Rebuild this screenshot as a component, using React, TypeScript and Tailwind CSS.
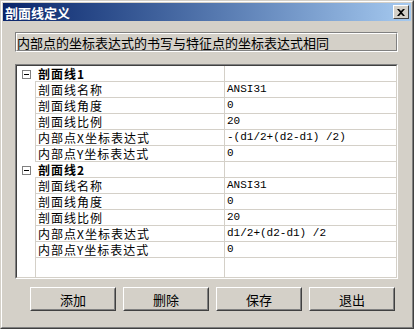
import React from "react";

interface PropRow {
  name: string;
  value: string;
}

interface HatchGroup {
  title: string;
  rows: PropRow[];
}

const groups: HatchGroup[] = [
  {
    title: "剖面线1",
    rows: [
      { name: "剖面线名称", value: "ANSI31" },
      { name: "剖面线角度", value: "0" },
      { name: "剖面线比例", value: "20" },
      { name: "内部点X坐标表达式", value: "-(d1/2+(d2-d1) /2)" },
      { name: "内部点Y坐标表达式", value: "0" },
    ],
  },
  {
    title: "剖面线2",
    rows: [
      { name: "剖面线名称", value: "ANSI31" },
      { name: "剖面线角度", value: "0" },
      { name: "剖面线比例", value: "20" },
      { name: "内部点X坐标表达式", value: "d1/2+(d2-d1) /2" },
      { name: "内部点Y坐标表达式", value: "0" },
    ],
  },
];

const buttons = ["添加", "删除", "保存", "退出"];

const cjk = "[font-family:'Noto_Sans_CJK_SC',sans-serif]";

const MinusBox = () => (
  <div className="w-[9px] h-[9px] border border-[#808080] bg-white flex items-center justify-center">
    <div className="w-[5px] h-px bg-black" />
  </div>
);

const Group = ({ group }: { group: HatchGroup }) => (
  <div>
    <div className="flex h-[16px]">
      <div className="w-[18px] flex items-center justify-center shrink-0">
        <MinusBox />
      </div>
      <div className="w-[189px] shrink-0 border-b border-[#d4d0c8] flex items-center pl-[3px] font-bold text-[12px] tracking-[1px] leading-none">
        {group.title}
      </div>
      <div className="flex-1 border-l border-b border-[#d4d0c8]" />
    </div>
    {group.rows.map((row, idx) => (
      <div key={idx} className="flex h-[16px]">
        <div className="w-[18px] shrink-0" />
        <div className="w-[189px] shrink-0 border-l border-b border-[#d4d0c8] flex items-center pl-[2px] text-[12px] tracking-[1px] leading-none">
          {row.name}
        </div>
        <div className="flex-1 border-l border-b border-[#d4d0c8] flex items-center pl-[2px] text-[11px] leading-none [font-family:'Liberation_Mono',monospace]">
          {row.value}
        </div>
      </div>
    ))}
  </div>
);

const App = () => {
  return (
    <div className={`w-[414px] h-[329px] bg-[#d4d0c8] text-black ${cjk}`}>
      <div className="w-full h-full border-t border-l border-[#d4d0c8] border-r border-b border-r-[#404040] border-b-[#404040]">
        <div className="w-full h-full border-t border-l border-white border-r border-b border-r-[#808080] border-b-[#808080] p-px flex flex-col">
          {/* title bar */}
          <div className="h-[18px] shrink-0 flex items-center justify-between pl-[2px] pr-[2px] bg-gradient-to-r from-[#0a246a] to-[#a6caf0]">
            <span className="text-white font-bold text-[13px] leading-none">剖面线定义</span>
            <div className="w-[16px] h-[14px] bg-[#d4d0c8] border border-t-white border-l-white border-r-[#404040] border-b-[#404040] flex items-center justify-center">
              <svg width="8" height="7" viewBox="0 0 8 7">
                <path d="M0 0h2l2 2 2-2h2L5 3.5 8 7H6L4 5 2 7H0l3-3.5z" fill="#000" />
              </svg>
            </div>
          </div>

          {/* hint box */}
          <div className="mt-[11px] ml-[12px] mr-[13px] h-[20px] border border-t-[#808080] border-l-[#808080] border-r-white border-b-white">
            <div className="h-full border border-t-white border-l-white border-r-[#808080] border-b-[#808080] flex items-center text-[13px] leading-none">
              内部点的坐标表达式的书写与特征点的坐标表达式相同
            </div>
          </div>

          {/* property grid */}
          <div className="mt-[12px] ml-[12px] mr-[13px] h-[215px] border border-t-[#808080] border-l-[#808080] border-r-white border-b-white">
            <div className="h-full bg-white border border-t-[#404040] border-l-[#404040] border-r-[#d4d0c8] border-b-[#d4d0c8] flex flex-col">
              {groups.map((g, idx) => (
                <Group key={idx} group={g} />
              ))}
              <div className="flex flex-1">
                <div className="w-[18px] shrink-0" />
                <div className="w-[189px] shrink-0 border-l border-[#d4d0c8]" />
                <div className="flex-1 border-l border-[#d4d0c8]" />
              </div>
            </div>
          </div>

          {/* buttons */}
          <div className="mt-[8px] pl-[27px] flex gap-[7px]">
            {buttons.map((b, idx) => (
              <div
                key={idx}
                className="w-[86px] h-[24px] border border-t-white border-l-white border-r-[#404040] border-b-[#404040]"
              >
                <div className="h-full border border-t-[#d4d0c8] border-l-[#d4d0c8] border-r-[#808080] border-b-[#808080] flex items-center justify-center text-[13px] leading-none">
                  {b}
                </div>
              </div>
            ))}
          </div>
        </div>
      </div>
    </div>
  );
};

export default App;
